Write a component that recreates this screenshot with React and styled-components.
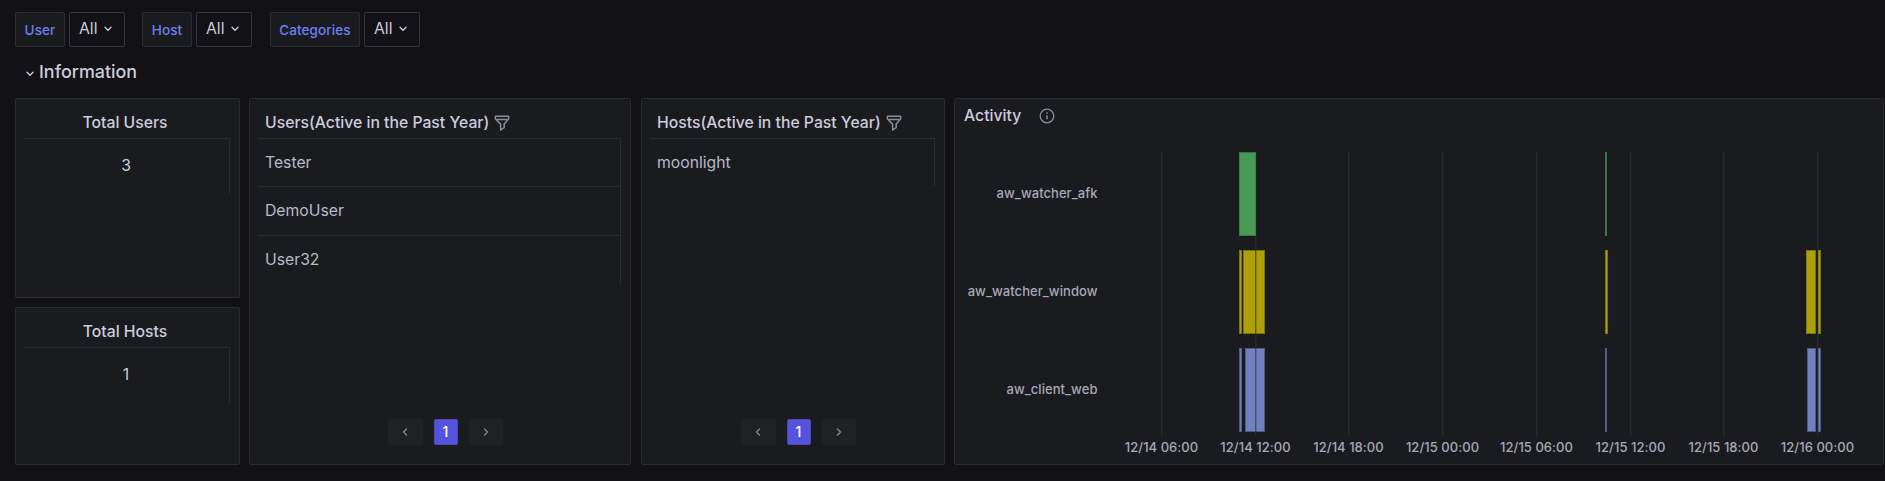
import React from 'react';
import styled, { createGlobalStyle } from 'styled-components';

const GlobalStyle = createGlobalStyle`
  * { box-sizing: border-box; }
  body {
    margin: 0;
    background: #111116;
    color: #ccccdc;
    font-family: Inter, "Liberation Sans", sans-serif;
    font-size: 15.75px;
    line-height: 24px;
    overflow: hidden;
  }
`;

const Page = styled.main`
  width: 1885px;
  height: 481px;
  padding: 12px 0 0 15px;
  background: #111116;
`;
const Filters = styled.div`
  display: flex;
  gap: 17px;
`;
const Filter = styled.div`
  display: flex;
  gap: 4px;
  margin-left: ${(p) => p.$shift || 0}px;
`;
const FilterLabel = styled.label`
  width: ${(p) => p.$width}px;
  height: 35px;
  border: 1px solid #2b2c31;
  border-radius: 2px;
  background: #1a1b1f;
  color: #6e7ff3;
  font-size: 13.5px;
  font-weight: 500;
  line-height: 34px;
  letter-spacing: 0.1px;
  text-align: center;
`;
const Picker = styled.button`
  display: flex;
  align-items: flex-start;
  width: 56px;
  height: 35px;
  padding: 4px 0 0 9px;
  gap: 6px;
  border: 1px solid #36373d;
  border-radius: 2px;
  background: #111116;
  color: #ccccdc;
  font: 400 15.75px/24px Inter, sans-serif;
  svg { margin-top: 8px; }
`;
const SectionTitle = styled.h2`
  display: flex;
  align-items: center;
  gap: 5px;
  height: 26px;
  margin: 12px 0 13px;
  padding-left: 11px;
  font-size: 17.9px;
  font-weight: 500;
  line-height: 26px;
  svg { margin-top: 3px; }
`;
const Grid = styled.div`
  display: grid;
  grid-template-columns: 225px 382px 305px 930px;
  column-gap: 9px;
  height: 367px;
`;
const Stack = styled.div`
  display: grid;
  grid-template-rows: 200px 158px;
  row-gap: 9px;
`;
const Panel = styled.section`
  display: flex;
  flex-direction: column;
  min-width: 0;
  margin-left: ${(p) => p.$inset || 0}px;
  padding: 8px 9px 0 8px;
  border: 1px solid #2a2b30;
  border-radius: 2px;
  background: #1a1b1f;
`;
const HeadCell = styled.div`
  display: flex;
  align-items: center;
  justify-content: ${(p) => (p.$center ? 'center' : 'flex-start')};
  gap: 5px;
  height: 31px;
  padding: ${(p) => (p.$center ? '0 4px 0 0' : '0 7px')};
  font-weight: 500;
  white-space: nowrap;
  svg { flex: none; margin-top: 1px; }
`;
const Rows = styled.div`
  border-top: 1px solid #2b2c31;
  border-right: 1px solid #2b2c31;
`;
const Row = styled.div`
  height: ${(p) => p.$height || 48}px;
  padding: ${(p) => (p.$center ? '15px 1px 0 0' : '12px 7px 0')};
  color: ${(p) => (p.$center ? '#ccccdc' : '#b9b9c8')};
  text-align: ${(p) => (p.$center ? 'center' : 'left')};
  & + & { border-top: 1px solid #2b2c31; }
`;
const Pager = styled.nav`
  display: flex;
  justify-content: center;
  gap: 11px;
  margin: auto 0 19px;
  padding-left: 12px;
`;
const PageButton = styled.button`
  display: flex;
  align-items: center;
  justify-content: center;
  width: ${(p) => (p.$current ? 24 : 34.5)}px;
  height: 26px;
  padding: 0;
  border: ${(p) => (p.$current ? '1px solid #4a48b8' : '0')};
  border-radius: 2px;
  background: ${(p) => (p.$current ? '#5552db' : '#202125')};
  color: ${(p) => (p.$current ? '#ffffff' : '#85858f')};
  font: 500 14px/24px Inter, sans-serif;
`;
const ActivityPanel = styled(Panel)`
  padding: 0;
`;
const ActivityHead = styled.header`
  display: flex;
  align-items: center;
  gap: 18px;
  height: 34px;
  padding: 0 0 1px 9px;
  font-weight: 500;
  svg { margin-top: 1px; }
`;
const Chart = styled.svg`
  display: block;
  text { font: 500 13px Inter, sans-serif; fill: #a8a8b6; letter-spacing: 0.05px; }
`;

const Chevron = ({ d = 'M1 2.300 L4 5.300 L7 2.300' }) => (
  <svg width="8" height="8" viewBox="0 0 8 8" fill="none" stroke="currentColor" strokeWidth="1.4" strokeLinecap="round" strokeLinejoin="round">
    <path d={d} />
  </svg>
);
const FilterIcon = () => (
  <svg width="16" height="16" viewBox="0 0 16 16" fill="none" stroke="#8b8b96" strokeWidth="1.5" strokeLinejoin="round">
    <path d="M2 1.300h12a.7.7 0 0 1 .7.7v1.300q0 .6-.4 1L10.200 9.100v3.500L6.600 15V9.100L1.700 4.300q-.4-.4-.4-1V2a.7.7 0 0 1 .7-.7zM1.600 4.500h12.800" />
  </svg>
);
const InfoIcon = () => (
  <svg width="16" height="16" viewBox="0 0 16 16" fill="none" stroke="#8b8b96" strokeWidth="1.3">
    <circle cx="8" cy="8" r="6.800" />
    <path d="M8 7.200v4.100M8 4.300v1.500" strokeWidth="1.500" />
  </svg>
);

const filters = [
  { name: 'User', width: 50 },
  { name: 'Host', width: 50 },
  { name: 'Categories', width: 90, shift: 1 },
];
const ticks = [
  [1161.5, '12/14 06:00'], [1255.5, '12/14 12:00'], [1348.5, '12/14 18:00'], [1442.5, '12/15 00:00'],
  [1536.5, '12/15 06:00'], [1630.5, '12/15 12:00'], [1723.5, '12/15 18:00'], [1817.5, '12/16 00:00'],
];
const series = [
  { name: 'aw_watcher_afk', y: 152, fill: '#479a53', edge: '#3a7545', bars: [[1239, 17], [1605, 2]] },
  { name: 'aw_watcher_window', y: 250, fill: '#ada009', edge: '#7c7411', bars: [[1239, 3], [1243, 22], [1605, 3], [1806, 10], [1818, 3]] },
  { name: 'aw_client_web', y: 348, fill: '#7180bf', edge: '#505a86', bars: [[1239, 3], [1245, 20], [1605, 2], [1807, 9], [1818, 3]] },
];

const Pagination = () => (
  <Pager>
    <PageButton><Chevron d="M5.500 1 L2.500 4 L5.500 7" /></PageButton>
    <PageButton $current>1</PageButton>
    <PageButton><Chevron d="M2.500 1 L5.500 4 L2.500 7" /></PageButton>
  </Pager>
);

const StatPanel = ({ title, value }) => (
  <Panel>
    <HeadCell $center>{title}</HeadCell>
    <Rows><Row $center $height={55}>{value}</Row></Rows>
  </Panel>
);

const rowHeights = [47, 49, 49];

const ListPanel = ({ title, items, inset }) => (
  <Panel $inset={inset}>
    <HeadCell>{title}<FilterIcon /></HeadCell>
    <Rows>{items.map((item, i) => <Row key={item} $height={rowHeights[i]}>{item}</Row>)}</Rows>
    <Pagination />
  </Panel>
);

const ActivityChart = () => (
  <Chart width="928" height="331" viewBox="955 133 928 331">
    {series.map((s) => (
      <g key={s.name}>
        <text x="1097.5" y={s.y + 46} textAnchor="end">{s.name}</text>
        {s.bars.map(([x, w]) => (
          <g key={x}>
            <rect x={x} y={s.y} width={w} height="84" fill={s.edge} />
            {w > 2 && <rect x={x + 1} y={s.y + 1} width={w - 2} height="82" fill={s.fill} />}
          </g>
        ))}
      </g>
    ))}
    {ticks.map(([x, label]) => (
      <g key={label}>
        <path d={`M${x + 0.2} 152V436`} stroke="#f0f0ff" strokeWidth="1.4" strokeOpacity={s_opacity} />
        {x === 1255.5 && <path d={`M${x + 0.2} 250V432`} stroke="#26272c" strokeWidth="1.4" strokeOpacity="0.6" />}
        <text x={x} y="452" textAnchor="middle">{label}</text>
      </g>
    ))}
  </Chart>
);

const s_opacity = 0.065;

export default function App() {
  return (
    <Page>
      <GlobalStyle />
      <Filters>
        {filters.map((f) => (
          <Filter key={f.name} $shift={f.shift}>
            <FilterLabel $width={f.width}>{f.name}</FilterLabel>
            <Picker>All<Chevron /></Picker>
          </Filter>
        ))}
      </Filters>
      <SectionTitle><Chevron />Information</SectionTitle>
      <Grid>
        <Stack>
          <StatPanel title="Total Users" value="3" />
          <StatPanel title="Total Hosts" value="1" />
        </Stack>
        <ListPanel title="Users(Active in the Past Year)" items={['Tester', 'DemoUser', 'User32']} />
        <ListPanel title="Hosts(Active in the Past Year)" items={['moonlight']} inset={1} />
        <ActivityPanel>
          <ActivityHead>Activity<InfoIcon /></ActivityHead>
          <ActivityChart />
        </ActivityPanel>
      </Grid>
    </Page>
  );
}
